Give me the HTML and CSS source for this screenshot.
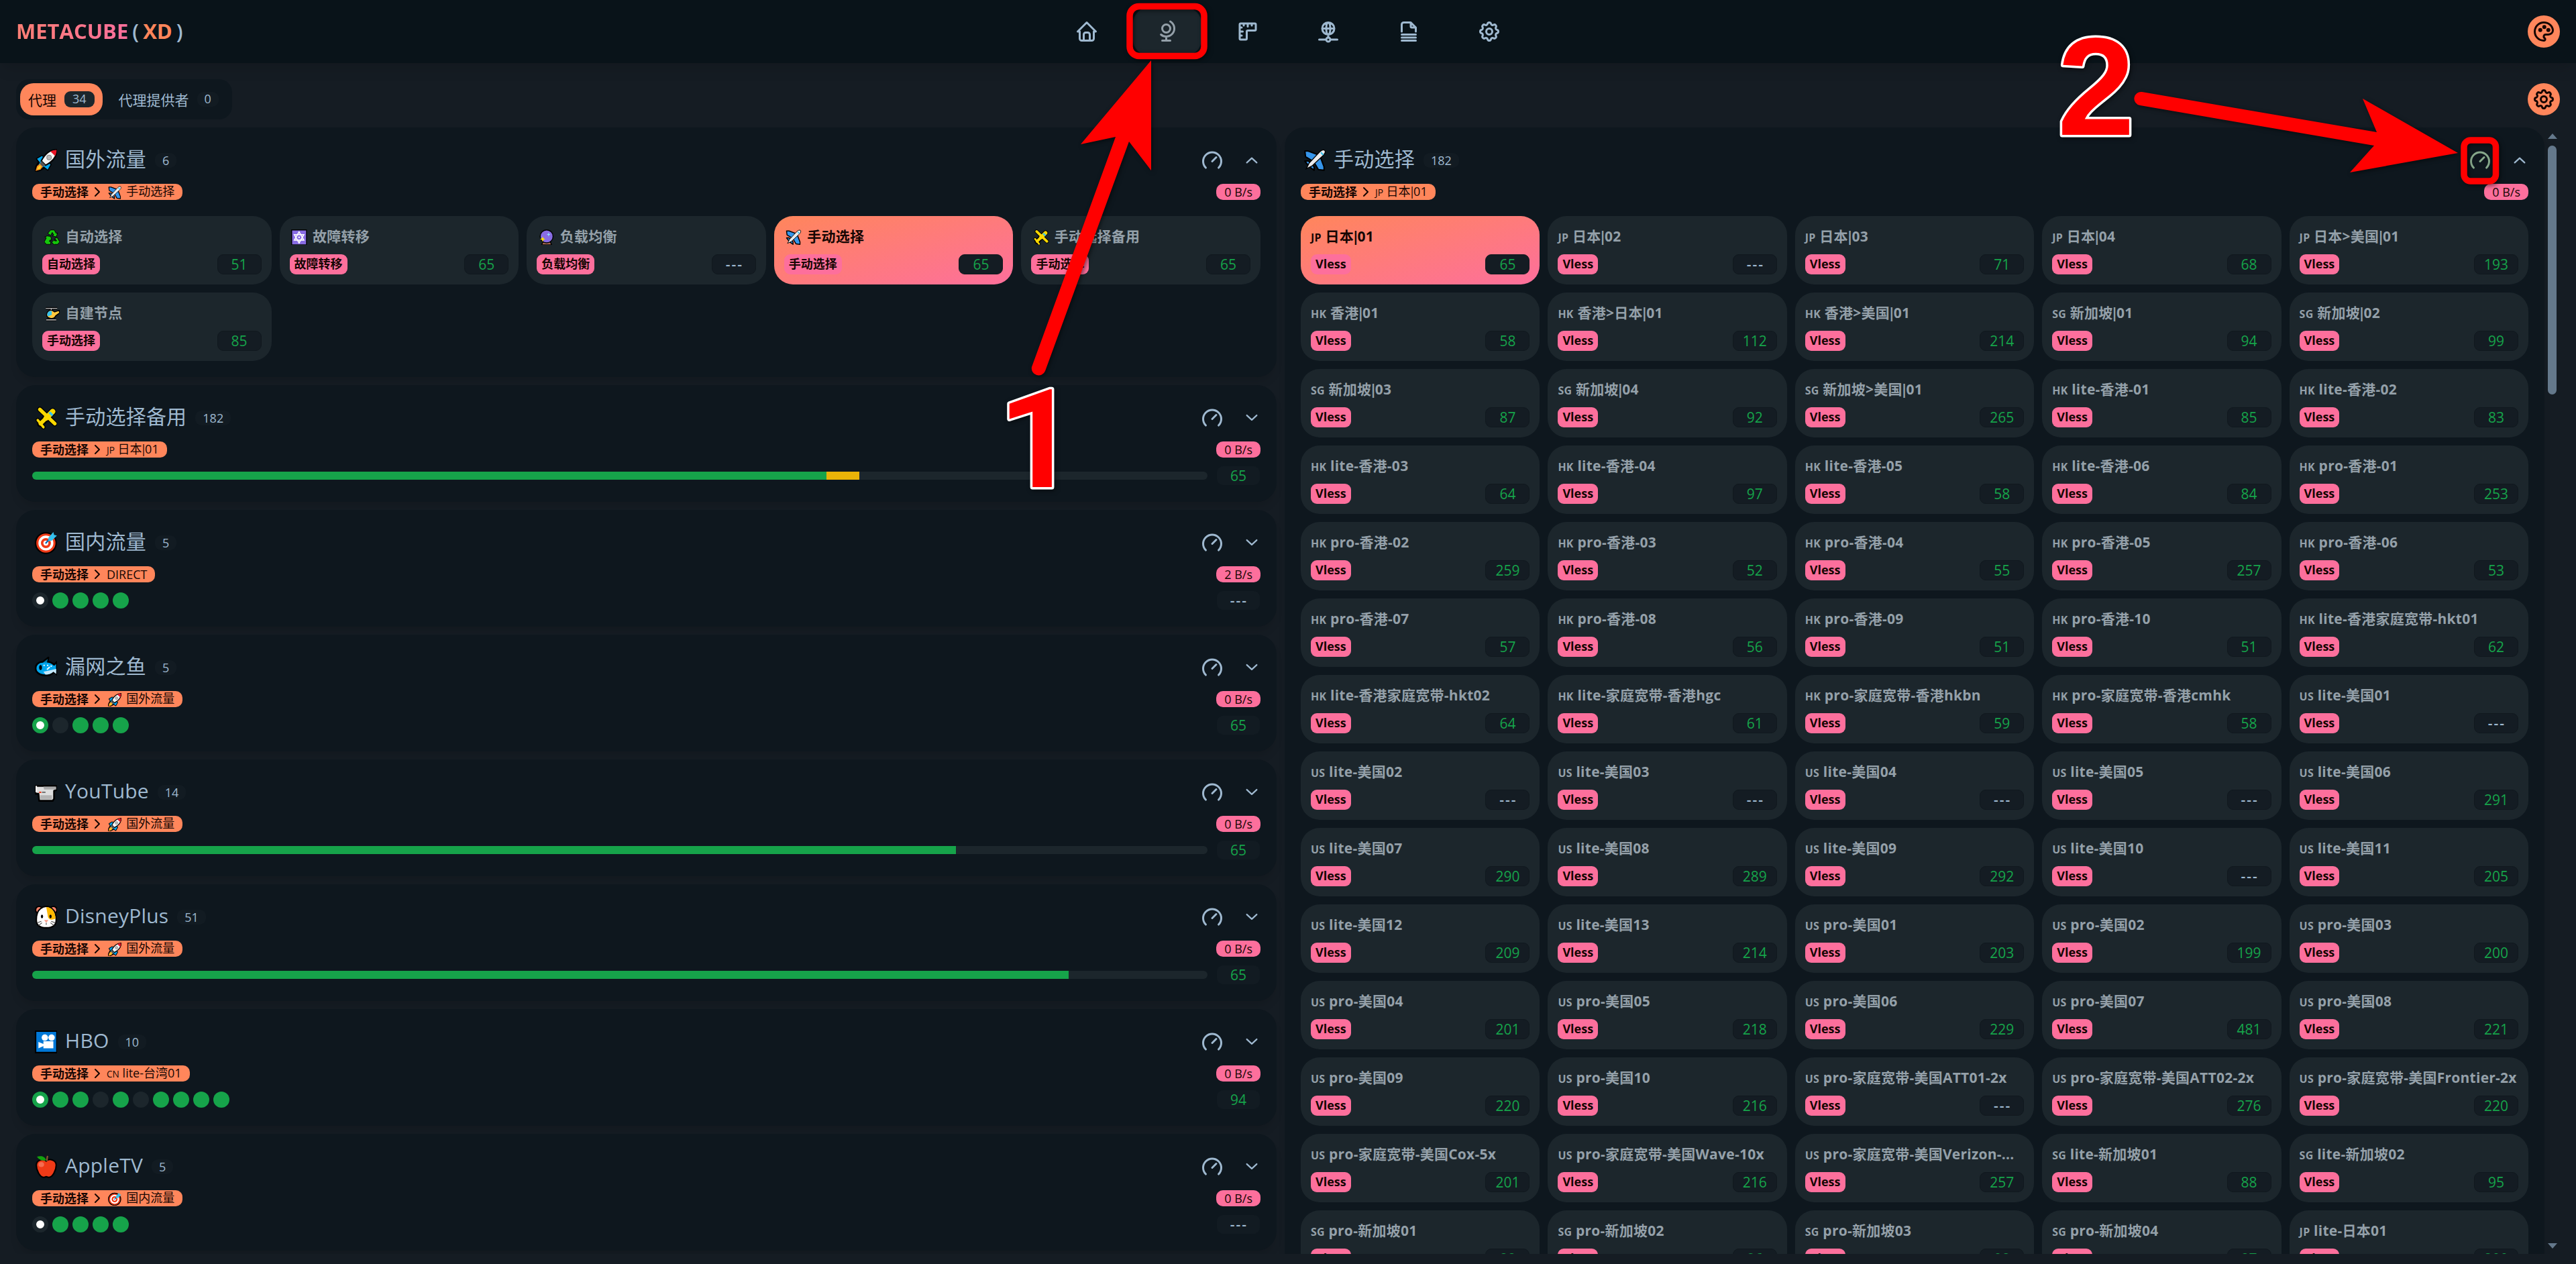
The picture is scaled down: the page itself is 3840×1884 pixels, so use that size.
FILE: index.html
```html
<!DOCTYPE html>
<html lang="zh-CN">

<head>
    <meta charset="UTF-8">
    <meta name="viewport" content="width=device-width, initial-scale=1.0">
    <title>MetaCubeXD</title>
    <link rel="stylesheet" href="styles.css">
</head>

<body>
    <!-- Icon and emoji sprites -->
    <svg class="sprites" xmlns="http://www.w3.org/2000/svg">
        <symbol id="i-home" viewBox="0 0 24 24">
            <path d="M5 12l-2 0l9 -9l9 9l-2 0M5 12v7a2 2 0 0 0 2 2h10a2 2 0 0 0 2 -2v-7M9 21v-6a2 2 0 0 1 2 -2h2a2 2 0 0 1 2 2v6" />
        </symbol>
        <symbol id="i-globe" viewBox="0 0 24 24">
            <path d="M7 9a4 4 0 1 0 8 0a4 4 0 0 0 -8 0M5.75 15a8.015 8.015 0 1 0 9.25 -13M11 17v4M7 21h8" />
        </symbol>
        <symbol id="i-ruler" viewBox="0 0 24 24">
            <path d="M5 4h14a1 1 0 0 1 1 1v5a1 1 0 0 1 -1 1h-7a1 1 0 0 0 -1 1v7a1 1 0 0 1 -1 1h-5a1 1 0 0 1 -1 -1v-14a1 1 0 0 1 1 -1M4 8l2 0M4 12l3 0M4 16l2 0M8 4l0 2M12 4l0 3M16 4l0 2" />
        </symbol>
        <symbol id="i-network" viewBox="0 0 24 24">
            <path d="M6 9a6 6 0 1 0 12 0a6 6 0 0 0 -12 0M12 3c1.333 .333 2 2.333 2 6s-.667 5.667 -2 6M12 3c-1.333 .333 -2 2.333 -2 6s.667 5.667 2 6M6 9h12M3 20h7M14 20h7M10 20a2 2 0 1 0 4 0a2 2 0 0 0 -4 0M12 15v3" />
        </symbol>
        <symbol id="i-file" viewBox="0 0 24 24">
            <path d="M14 3v4a1 1 0 0 0 1 1h4M5 12v-7a2 2 0 0 1 2 -2h7l5 5v4M5 21h14M5 18h14M5 15h14" />
        </symbol>
        <symbol id="i-settings" viewBox="0 0 24 24">
            <path d="M10.325 4.317c.426 -1.756 2.924 -1.756 3.35 0a1.724 1.724 0 0 0 2.573 1.066c1.543 -.94 3.31 .826 2.37 2.37a1.724 1.724 0 0 0 1.065 2.572c1.756 .426 1.756 2.924 0 3.35a1.724 1.724 0 0 0 -1.066 2.573c.94 1.543 -.826 3.31 -2.37 2.37a1.724 1.724 0 0 0 -2.572 1.065c-.426 1.756 -2.924 1.756 -3.35 0a1.724 1.724 0 0 0 -2.573 -1.066c-1.543 .94 -3.31 -.826 -2.37 -2.37a1.724 1.724 0 0 0 -1.065 -2.572c-1.756 -.426 -1.756 -2.924 0 -3.35a1.724 1.724 0 0 0 1.066 -2.573c-.94 -1.543 .826 -3.31 2.37 -2.37c1 .608 2.296 .07 2.572 -1.065zM9 12a3 3 0 1 0 6 0a3 3 0 0 0 -6 0" />
        </symbol>
        <symbol id="i-palette" viewBox="0 0 24 24">
            <path d="M12 21a9 9 0 0 1 0 -18c4.97 0 9 3.582 9 8c0 1.06 -.474 2.078 -1.318 2.828c-.844 .75 -1.989 1.172 -3.182 1.172h-2.5a2 2 0 0 0 -1 3.75a1.3 1.3 0 0 1 -1 2.25M7.5 10.5a1 1 0 1 0 2 0a1 1 0 0 0 -2 0M11.5 7.5a1 1 0 1 0 2 0a1 1 0 0 0 -2 0M15.500 10.5a1 1 0 1 0 2 0a1 1 0 0 0 -2 0" />
        </symbol>
        <symbol id="i-speed" viewBox="0 0 24 24">
            <path d="M5.636 19.364a9 9 0 1 1 12.728 0M16 9l-4 4" />
        </symbol>
        <symbol id="i-right" viewBox="0 0 24 24">
            <path d="M9 6l6 6l-6 6" />
        </symbol>
        <symbol id="i-down" viewBox="0 0 16 16">
            <path d="M1.500 4.500l6.500 6l6.500 -6" />
        </symbol>
        <symbol id="i-up" viewBox="0 0 16 16">
            <path d="M1.500 11l6.500 -6l6.500 6" />
        </symbol>

        <symbol id="e-rocket" viewBox="0 0 32 32">
            <path d="M3 14l7-4l12 12l-4 7l-4-3l-8 4l-5 1l1-6l4-7z" fill="#00a6ed" stroke="#000" stroke-width="3" stroke-linejoin="round" />
            <path d="M3 14l7-4l3 3l-6 6zM18 29l4-7l-4-3l-5 6z" fill="#00a6ed" />
            <path d="M31 1c-9 0-17 6-22 16l6 6c10-5 16-13 16-22z" fill="#f4f4f4" stroke="#000" stroke-width="2" />
            <path d="M30.500 1.500c-3 0-6 .7-8.500 2l6.500 6.500c1.300-2.500 2-5.500 2-8.500z" fill="#e81224" />
            <circle cx="20" cy="12" r="3.200" fill="#bbb" stroke="#888" />
            <path d="M9 17l-2 4l4 4l4-2z" fill="#555" />
            <path d="M7 21l-4 3l-2 7l7-2l3-4z" fill="#ff8c1a" />
            <path d="M7 23l-3 3l-1 3l4-1l2-3z" fill="#ffd02b" />
        </symbol>
        <symbol id="e-plane" viewBox="0 0 32 32">
            <g fill="#3695ea" stroke="#000" stroke-width="2" stroke-linejoin="round">
                <path d="M2 3l5 0l16 6l-8 9l-12-7z" />
                <path d="M29 30l0-5l-6-16l-9 8l7 12z" />
                <path d="M2 17l5 0l6 5l-5 3z" />
                <path d="M15 30l0-5l-5-6l-3 5z" />
            </g>
            <path d="M4 4l4 1l13 6l-6 6l-11-7zM28 28l-1-4l-6-13l-6 6l7 11z" fill="#3695ea" />
            <path d="M30 2c-2-1.500-5 0-7 2l-15 16l-4 8l8-4l16-15c2-2 3.500-5 2-7z" fill="#e9eaec" stroke="#000" stroke-width="1.200" />
            <path d="M25 4l4 4l-2 1l-3-3z" fill="#35c1ee" />
        </symbol>
        <symbol id="e-recycle" viewBox="0 0 32 32">
            <g fill="#16c60c" stroke="#000" stroke-width="1.300" stroke-linejoin="round">
                <path d="M10 4l3-3h7l4 7l3-1l-3 8l-8-2l3-2l-3-5l-3 6l-6-4z" />
                <path d="M26 16l5 9l-4 5h-6v2l-6-6l6-6v3h4l-4-5z" />
                <path d="M6 13l7 1l2 8l-3-1l-2 3h3v6h-9l-4-5l4-8l-3-2z" />
            </g>
        </symbol>
        <symbol id="e-star" viewBox="0 0 32 32">
            <path d="M1 1h30v30h-30z" fill="#886ce4" stroke="#000" stroke-width="2" />
            <path d="M16 5l9.500 16.500h-19zM16 27l-9.500-16.500h19z" fill="none" stroke="#fff" stroke-width="2.200" />
            <circle cx="16" cy="16" r="1.700" fill="#fff" />
        </symbol>
        <symbol id="e-crystal" viewBox="0 0 32 32">
            <path d="M9 24h14l3 7h-20z" fill="#a56953" stroke="#000" stroke-width="2" />
            <circle cx="16" cy="14" r="13" fill="#886ce4" stroke="#000" stroke-width="2" />
            <path d="M20 6l1 3l3 1l-3 1l-1 3l-1-3l-3-1l3-1z" fill="#8ee8ff" />
            <path d="M8 14l1.500 4l4 1.500l-4 1.500l-1.500 4l-1.500-4l-4-1.500l4-1.500z" fill="#fde300" />
        </symbol>
        <symbol id="e-jet" viewBox="0 0 32 32">
            <g fill="none" stroke="#000" stroke-linecap="round">
                <path d="M7 4l21 20" stroke-width="7.500" />
                <path d="M25 7l-17 17" stroke-width="10" />
                <path d="M4 19l8 10" stroke-width="6" />
            </g>
            <g fill="none" stroke="#fcd800" stroke-linecap="round">
                <path d="M7 4l21 20" stroke-width="5" />
                <path d="M25 7l-9 9" stroke-width="7.500" />
                <path d="M16 16l-8 8" stroke-width="5.500" />
                <path d="M4 19l8 10" stroke-width="3.500" />
            </g>
            <path d="M19 9l3-2l4 4l-2 3z" fill="#35c1ee" />
        </symbol>
        <symbol id="e-heli" viewBox="0 0 32 32">
            <path d="M3 5h23M14 4v4M4 28h20M9 24v4M19 24v4" stroke="#000" stroke-width="5" />
            <path d="M21 12l9-3l1 5l-8 6c-2 4-6 6-11 5c-5-1-8-4-7-9c1-5 6-9 11-7z" fill="#ffc83d" stroke="#000" stroke-width="2" />
            <path d="M11 10c-5 2-7 8-3 11l7-3v-8z" fill="#35c1ee" />
            <path d="M3 5h23M14 4v4M4 28h20" stroke="#bbb" stroke-width="1.800" />
        </symbol>
        <symbol id="e-target" viewBox="0 0 32 32">
            <circle cx="15.500" cy="16.500" r="14.500" fill="#f03a17" stroke="#000" stroke-width="2" />
            <circle cx="15.500" cy="16.500" r="10.500" fill="#fff" />
            <circle cx="15.500" cy="16.500" r="7" fill="#f03a17" />
            <circle cx="15.500" cy="16.500" r="3.500" fill="#fff" />
            <path d="M15 17l8-9" stroke="#0063b1" stroke-width="2" />
            <path d="M19 9l7-8l1 4l4 1l-7 7l-5 1z" fill="#35c1ee" />
        </symbol>
        <symbol id="e-fish" viewBox="0 0 32 32">
            <path d="M11 8l8-6l-1 6c4 0 7 2 9 4l4-4v18l-4-4c-4 5-8 5-12 5c-8 0-14-4-14-10c0-5 4-9 10-9z" fill="#00a6ed" stroke="#000" stroke-width="2.500" stroke-linejoin="round" />
            <path d="M12 22l18-4v7l-4-3c-3 3-7 4-11 4z" fill="#c3e7fa" />
            <path d="M12 9l6-5l-1 5z" fill="#0078a8" />
            <ellipse cx="8" cy="16" rx="2" ry="3.500" fill="#000" />
            <path d="M12 13h2M17 13h2M22 14h2M17 19l4-4" stroke="#e8f8ff" stroke-width="2" />
        </symbol>
        <symbol id="e-camera" viewBox="0 0 32 32">
            <path d="M1 7h29v6l-3 1v11l-2 3h-19l-1-10h-4z" fill="#dedede" stroke="#000" stroke-width="2.500" stroke-linejoin="round" />
            <path d="M12 8h18v4h-17z" fill="#a9a9a9" />
            <path d="M7 20h17v6h-16z" fill="#b4b4b4" />
            <path d="M6 16h3" stroke="#f03a17" stroke-width="2" />
            <path d="M10 16h5" stroke="#777" stroke-width="2" />
            <path d="M1 7h2v9h-2z" fill="#fff" />
        </symbol>
        <symbol id="e-hamster" viewBox="0 0 32 32">
            <circle cx="6" cy="6" r="5" fill="#f8846c" stroke="#000" stroke-width="2" />
            <circle cx="26" cy="6" r="5" fill="#f8846c" stroke="#000" stroke-width="2" />
            <path d="M8 4c5-4 11-4 16 0c4 3 6 9 6 16c0 6-3 11-14 11s-14-5-14-11c0-7 2-13 6-16z" fill="#fff" stroke="#000" stroke-width="2" />
            <path d="M16 2c8 0 13 7 13 16c-5 3-11 2-11-5z" fill="#ffb900" />
            <ellipse cx="10" cy="15" rx="1.600" ry="2.600" fill="#000" />
            <ellipse cx="22" cy="15" rx="1.600" ry="2.600" fill="#000" />
            <path d="M13 20h6l-3 4z" fill="#f8a08c" />
            <path d="M3 24l6-2M5 28l5-4M29 24l-6-2M27 28l-5-4M16 24v3" stroke="#444" fill="none" />
        </symbol>
        <symbol id="e-cinema" viewBox="0 0 32 32">
            <path d="M1 1h30v30h-30z" fill="#0078d7" stroke="#000" stroke-width="2" />
            <circle cx="14" cy="10" r="4.500" fill="#fff" />
            <circle cx="23.500" cy="10" r="4.500" fill="#fff" />
            <path d="M12 15h14v10h-14v-3l-7 3v-9l7 3z" fill="#fff" />
        </symbol>
        <symbol id="e-apple" viewBox="0 0 32 32">
            <path d="M16 8c4-4 14-2 14 6c0 7-5 17-10 17c-2 0-3-1-4-1s-2 1-4 1c-5 0-10-10-10-17c0-8 10-10 14-6z" fill="#f03a17" stroke="#000" stroke-width="2" />
            <path d="M17 8c0-3 0-5 1-7" stroke="#8e562e" stroke-width="2" fill="none" />
            <path d="M3 2c5-2 11-1 13 5c-6 1-10 0-13-5z" fill="#13a10e" />
            <ellipse cx="9" cy="13" rx="4" ry="3.500" fill="#f56d52" />
        </symbol>
    </svg>

    <header class="navbar">
        <a class="logo" href="#"><span class="logo-name">METACUBE</span><span class="paren">(</span><span class="logo-xd">XD</span><span class="paren">)</span></a>
        <nav class="menu">
            <a href="#"><svg class="icon"><use href="#i-home" /></svg></a>
            <a href="#" class="active"><svg class="icon"><use href="#i-globe" /></svg></a>
            <a href="#"><svg class="icon"><use href="#i-ruler" /></svg></a>
            <a href="#"><svg class="icon"><use href="#i-network" /></svg></a>
            <a href="#"><svg class="icon"><use href="#i-file" /></svg></a>
            <a href="#"><svg class="icon"><use href="#i-settings" /></svg></a>
        </nav>
        <button class="round-btn"><svg class="icon-sm"><use href="#i-palette" /></svg></button>
    </header>

    <main>
        <div class="toolbar">
            <div class="tabs">
                <button class="tab tab-active">代理<span class="tab-count">34</span></button>
                <button class="tab">代理提供者<span class="count">0</span></button>
            </div>
            <button class="round-btn"><svg class="icon-sm"><use href="#i-settings" /></svg></button>
        </div>
        <div class="columns">
            <div class="column" id="left"></div>
            <div class="column" id="right"></div>
            <div class="scrollbar">
                <span class="arrow-up"></span>
                <span class="thumb"></span>
                <span class="arrow-down"></span>
            </div>
        </div>
    </main>

    <!-- Step marks drawn over the page -->
    <svg class="marks" viewBox="0 0 3840 1884">
        <rect x="1684" y="9.500" width="111" height="74" rx="14" />
        <rect x="3673" y="209" width="47.500" height="61" rx="10" />
        <path d="M1716 90L1611 215L1663 204L1538 547A10.500 10.500 0 0 0 1558 553L1683 211L1716 254Z" />
        <path d="M3664 228L3522 147L3543 197L3193 137A10 10 0 0 0 3190 157L3539 217L3503 257Z" />
        <text class="mark-one" x="1488" y="726">1</text>
        <text x="3067" y="201">2</text>
    </svg>

    <script src="script.js"></script>
</body>

</html>
```
FILE: styles.css
```css
:root {
    --base-100: #151c23;
    --base-200: #0e171e;
    --base-300: #091319;
    --neutral: #1c262c;
    --content: #9fb9d0;
    --muted: #94a0a9;
    --primary: #ff865b;
    --secondary: #fd6f9c;
    --green: #16a34a;
    --yellow: #eab308;
    --dark: #160603;
}

* {
    box-sizing: border-box;
}

body {
    margin: 0;
    width: 3840px;
    height: 1884px;
    overflow: hidden;
    position: relative;
    background-color: var(--base-100);
    color: var(--content);
    font-family: "Open Sans", "Noto Sans CJK SC", sans-serif;
    font-size: 21px;
}

a {
    color: inherit;
    text-decoration: none;
}

button {
    border: none;
    background: none;
    padding: 0;
    color: inherit;
    font: inherit;
}

.sprites {
    display: none;
}

.icon,
.icon-sm,
.speed-icon,
.chevron,
.arrow {
    fill: none;
    stroke: currentColor;
    stroke-width: 2;
    stroke-linecap: round;
    stroke-linejoin: round;
}

.icon,
.icon-sm {
    width: 36px;
    height: 36px;
}

/* navbar */
.navbar {
    display: grid;
    grid-template-columns: 1fr auto 1fr;
    align-items: center;
    height: 94px;
    padding: 0 24px;
    background-color: var(--base-300);
    box-shadow: 0 12px 20px -4px rgba(0, 0, 0, 0.12);
}

.navbar .round-btn {
    justify-self: end;
}

.logo {
    display: flex;
    font-size: 31px;
    font-weight: 700;
    line-height: 40px;
    padding-bottom: 3px;
}

.logo-name {
    background: linear-gradient(90deg, #ff7f74, var(--secondary));
    -webkit-background-clip: text;
    background-clip: text;
    color: transparent;
}

.logo-xd {
    color: var(--primary);
}

.paren {
    font-weight: 600;
    margin: 0 6px;
}

.menu {
    display: flex;
    gap: 18px;
}

.menu a {
    display: flex;
    align-items: center;
    justify-content: center;
    width: 102px;
    height: 72px;
    border-radius: 24px;
    padding-bottom: 1px;
}

.menu .active {
    background-color: var(--neutral);
    color: var(--muted);
}

.round-btn {
    display: flex;
    align-items: center;
    justify-content: center;
    width: 48px;
    height: 48px;
    margin-bottom: 1px;
    border-radius: 50%;
    background-color: var(--primary);
    color: var(--dark);
}

/* tabs */
.toolbar {
    display: flex;
    align-items: center;
    justify-content: space-between;
    padding: 24px 24px 12px;
}

.tabs {
    display: flex;
    align-items: center;
    gap: 12px;
    height: 60px;
    padding: 0 8px 0 6px;
    border-radius: 20px;
    background-color: var(--base-200);
}

.tab {
    display: flex;
    align-items: center;
    gap: 12px;
    height: 48px;
    padding: 0 12px 1px;
    border-radius: 20px;
}

.tab-active {
    background-color: var(--primary);
    color: var(--dark);
}

.tab-count,
.count {
    display: flex;
    align-items: center;
    justify-content: center;
    font-size: 18px;
    color: var(--content);
}

.tab-count {
    height: 24px;
    padding: 0 12px 1px;
    border-radius: 9px;
    background-color: var(--neutral);
}

.count {
    height: 22px;
    padding: 0 11px 1px;
    border-radius: 9px;
    background-color: #121b22;
}

/* columns */
.columns {
    display: flex;
    gap: 12px;
    height: 1679px;
    padding-left: 24px;
    overflow: hidden;
}

.column {
    display: flex;
    flex-direction: column;
    gap: 12px;
    width: 1879px;
}

#right {
    width: 1878px;
}

.group {
    flex: none;
    padding: 24px 24px 25px;
    border-radius: 29px;
    background-color: var(--base-200);
    box-shadow: 0 10px 14px -4px rgba(0, 0, 0, 0.12);
}

.group.open {
    padding-bottom: 24px;
}

.group-head {
    display: flex;
    align-items: center;
    height: 50px;
}

.group-title {
    font-size: 30px;
    line-height: 44px;
    letter-spacing: 0.2px;
    white-space: pre;
    margin-right: 13px;
    padding-bottom: 4px;
}

.emoji {
    display: inline-flex;
    justify-content: center;
    width: 1.37em;
    vertical-align: -0.26em;
}

.emoji svg {
    width: 1.13em;
    height: 1.13em;
}

.flag {
    font-size: 0.76em;
}

.sep {
    margin: 0 -0.15em;
}

.speed-icon {
    width: 36px;
    height: 36px;
    margin-left: auto;
}

.speed-icon.hover {
    color: #86a88b;
}

.chevron {
    width: 18px;
    height: 18px;
    margin: 0 4px 0 32px;
}

.group-info {
    display: flex;
    justify-content: space-between;
    height: 24px;
    margin-top: 10px;
}

.selected,
.rate {
    display: flex;
    align-items: center;
    height: 24px;
    padding: 0 12px;
    border-radius: 10px;
    font-size: 18px;
    line-height: 22px;
    white-space: pre;
    color: var(--dark);
}

.selected {
    background-color: var(--primary);
}

.selected b,
.selected span,
.rate {
    padding-bottom: 1px;
}

.selected .emoji,
.selected .flag,
.selected .sep {
    padding-bottom: 0;
}

.selected .arrow {
    width: 24px;
    height: 24px;
    margin: 0 2px 0 1px;
}

.rate {
    background-color: var(--secondary);
}

.preview {
    display: flex;
    align-items: center;
    justify-content: space-between;
    height: 28px;
    margin-top: 13px;
}

.bar {
    display: flex;
    width: 1752px;
    height: 12px;
    border-radius: 6px;
    overflow: hidden;
    background-color: var(--neutral);
}

.bar-green {
    background-color: var(--green);
}

.bar-yellow {
    background-color: var(--yellow);
}

.dots {
    display: flex;
    gap: 6px;
    height: 24px;
}

.dot {
    width: 24px;
    height: 24px;
    border-radius: 50%;
    background-color: var(--green);
}

.dot.off {
    background-color: var(--neutral);
}

.dot.now {
    border: 6px solid var(--green);
    background-color: #fff;
}

.dot.now.off {
    border-color: var(--neutral);
}

.latency {
    display: flex;
    align-items: center;
    justify-content: center;
    width: 66px;
    height: 30px;
    border: 1px solid #10181e;
    border-radius: 9px;
    background-color: #141c23;
    font-size: 21px;
    line-height: 28px;
    color: var(--green);
}

.preview .latency {
    width: 64px;
    height: 28px;
    margin-right: 1px;
    border-color: #121b22;
    background-color: #121b22;
}

.latency.none {
    color: var(--content);
    font-weight: 600;
    letter-spacing: 2px;
    padding-left: 2px;
}

/* nodes */
.nodes {
    display: grid;
    grid-template-columns: repeat(5, 1fr);
    gap: 12px;
    margin-top: 24px;
}

.node {
    min-width: 0;
    height: 102px;
    padding: 15px;
    border-radius: 28px;
    background-color: var(--neutral);
    color: var(--muted);
}

.node.active {
    background: linear-gradient(to bottom right, var(--primary), var(--secondary));
    color: var(--dark);
}

.node-name {
    height: 32px;
    line-height: 30px;
    font-weight: 700;
    letter-spacing: 0.25px;
    white-space: pre;
}

.node-foot {
    display: flex;
    align-items: center;
    justify-content: space-between;
    margin-top: 10px;
}

.type {
    height: 30px;
    padding: 0 7px;
    border-radius: 9px;
    background-color: var(--secondary);
    color: var(--dark);
    font-size: 18px;
    font-weight: 700;
    line-height: 29px;
}

/* scrollbar */
.scrollbar {
    display: flex;
    flex-direction: column;
    align-items: center;
    width: 15px;
    margin-left: -8px;
    padding: 9px 0 8px;
}

.arrow-up,
.arrow-down {
    border-left: 7.5px solid transparent;
    border-right: 7.5px solid transparent;
}

.arrow-up {
    border-bottom: 8px solid #64788b;
}

.arrow-down {
    border-top: 8px solid #64788b;
    margin-top: auto;
}

.thumb {
    width: 13px;
    height: 371px;
    margin-top: 10px;
    border-radius: 7px;
    background-color: #64788b;
}

/* step marks */
.marks {
    position: absolute;
    top: 0;
    left: 0;
    width: 3840px;
    height: 1884px;
    pointer-events: none;
    filter: drop-shadow(2px 2px 3px rgba(0, 0, 0, 0.5));
}

.marks rect {
    fill: none;
    stroke: #f00;
    stroke-width: 9.5;
}

.marks path {
    fill: #f00;
}

.marks text {
    font-family: "Liberation Sans", sans-serif;
    font-size: 207px;
    font-weight: 700;
    fill: #f00;
    stroke: #fff;
    stroke-width: 7px;
    stroke-linejoin: round;
    paint-order: stroke;
}

.marks .mark-one {
    font-family: Roboto, sans-serif;
    font-size: 204px;
}
```
FILE: script.js
```js
// "[x]" at the start of a name is an emoji, "{XX}" is a region code
function label(name) {
    return name
        .replace('>', '&gt;')
        .replace('|', '<span class="sep">|</span>')
        .replace(/^\[(\w+)\]/, '<span class="emoji"><svg><use href="#e-$1" /></svg></span>')
        .replace(/^\{(\w+)\}/, '<span class="flag">$1</span>');
}

function latency(value) {
    return `<span class="latency ${value === '---' ? 'none' : ''}">${value}</span>`;
}

function nodeCard(name, type, value, active) {
    return `<div class="node ${active ? 'active' : ''}">
        <div class="node-name">${label(name)}</div>
        <div class="node-foot"><span class="type">${type}</span>${latency(value)}</div>
    </div>`;
}

function preview(g) {
    if (g.bar) {
        return `<div class="bar">
            <span class="bar-green" style="width: ${g.bar[0]}%"></span>
            <span class="bar-yellow" style="width: ${g.bar[1]}%"></span>
        </div>`;
    }
    // 1 = reachable, 0 = no result, the first one is in use
    return '<div class="dots">' + g.dots.split('').map((d, i) =>
        `<span class="dot ${d === '0' ? 'off' : ''} ${i === 0 ? 'now' : ''}"></span>`).join('') + '</div>';
}

function groupCard(g) {
    const body = g.nodes
        ? `<div class="nodes">${g.nodes}</div>`
        : `<div class="preview">${preview(g)}${latency(g.latency)}</div>`;
    return `<section class="group ${g.nodes ? 'open' : ''}">
        <div class="group-head">
            <span class="group-title">${label(g.name)}</span>
            <span class="count">${g.count}</span>
            <svg class="speed-icon ${g.hover ? 'hover' : ''}"><use href="#i-speed" /></svg>
            <svg class="chevron"><use href="#${g.nodes ? 'i-up' : 'i-down'}" /></svg>
        </div>
        <div class="group-info">
            <span class="selected"><b>手动选择</b><svg class="arrow"><use href="#i-right" /></svg><span>${label(g.now)}</span></span>
            <span class="rate">${g.rate || '0 B/s'}</span>
        </div>
        ${body}
    </section>`;
}

const groups = [
    ['[recycle] 自动选择', '自动选择', '51'],
    ['[star] 故障转移', '故障转移', '65'],
    ['[crystal] 负载均衡', '负载均衡', '---'],
    ['[plane] 手动选择', '手动选择', '65', true],
    ['[jet] 手动选择备用', '手动选择', '65'],
    ['[heli] 自建节点', '手动选择', '85']
];

const left = [
    { name: '[rocket] 国外流量', count: 6, now: '[plane] 手动选择', nodes: groups.map(n => nodeCard(...n)).join('') },
    { name: '[jet] 手动选择备用', count: 182, now: '{JP} 日本|01', bar: [67.6, 2.8], latency: '65' },
    { name: '[target] 国内流量', count: 5, now: 'DIRECT', rate: '2 B/s', dots: '01111', latency: '---' },
    { name: '[fish] 漏网之鱼', count: 5, now: '[rocket] 国外流量', dots: '10111', latency: '65' },
    { name: '[camera] YouTube', count: 14, now: '[rocket] 国外流量', bar: [78.6, 0], latency: '65' },
    { name: '[hamster] DisneyPlus', count: 51, now: '[rocket] 国外流量', bar: [88.2, 0], latency: '65' },
    { name: '[cinema] HBO', count: 10, now: '{CN} lite-台湾01', dots: '1110101111', latency: '94' },
    { name: '[apple] AppleTV', count: 5, now: '[target] 国内流量', dots: '01111', latency: '---' }
];

const nodes = `JP 日本|01,65
JP 日本|02,---
JP 日本|03,71
JP 日本|04,68
JP 日本>美国|01,193
HK 香港|01,58
HK 香港>日本|01,112
HK 香港>美国|01,214
SG 新加坡|01,94
SG 新加坡|02,99
SG 新加坡|03,87
SG 新加坡|04,92
SG 新加坡>美国|01,265
HK lite-香港-01,85
HK lite-香港-02,83
HK lite-香港-03,64
HK lite-香港-04,97
HK lite-香港-05,58
HK lite-香港-06,84
HK pro-香港-01,253
HK pro-香港-02,259
HK pro-香港-03,52
HK pro-香港-04,55
HK pro-香港-05,257
HK pro-香港-06,53
HK pro-香港-07,57
HK pro-香港-08,56
HK pro-香港-09,51
HK pro-香港-10,51
HK lite-香港家庭宽带-hkt01,62
HK lite-香港家庭宽带-hkt02,64
HK lite-家庭宽带-香港hgc,61
HK pro-家庭宽带-香港hkbn,59
HK pro-家庭宽带-香港cmhk,58
US lite-美国01,---
US lite-美国02,---
US lite-美国03,---
US lite-美国04,---
US lite-美国05,---
US lite-美国06,291
US lite-美国07,290
US lite-美国08,289
US lite-美国09,292
US lite-美国10,---
US lite-美国11,205
US lite-美国12,209
US lite-美国13,214
US pro-美国01,203
US pro-美国02,199
US pro-美国03,200
US pro-美国04,201
US pro-美国05,218
US pro-美国06,229
US pro-美国07,481
US pro-美国08,221
US pro-美国09,220
US pro-美国10,216
US pro-家庭宽带-美国ATT01-2x,---
US pro-家庭宽带-美国ATT02-2x,276
US pro-家庭宽带-美国Frontier-2x,220
US pro-家庭宽带-美国Cox-5x,201
US pro-家庭宽带-美国Wave-10x,216
US pro-家庭宽带-美国Verizon-...,257
SG lite-新加坡01,88
SG lite-新加坡02,95
SG pro-新加坡01,88
SG pro-新加坡02,86
SG pro-新加坡03,98
SG pro-新加坡04,87
JP lite-日本01,200`.split('\n').map((line, i) => {
    const [name, value] = line.split(',');
    return nodeCard(name.replace(/^(\w\w)/, '{$1}'), 'Vless', value, i === 0);
}).join('');

document.getElementById('left').innerHTML = left.map(groupCard).join('');
document.getElementById('right').innerHTML = groupCard({
    name: '[plane] 手动选择', count: 182, now: '{JP} 日本|01', nodes: nodes, hover: true
});
```
